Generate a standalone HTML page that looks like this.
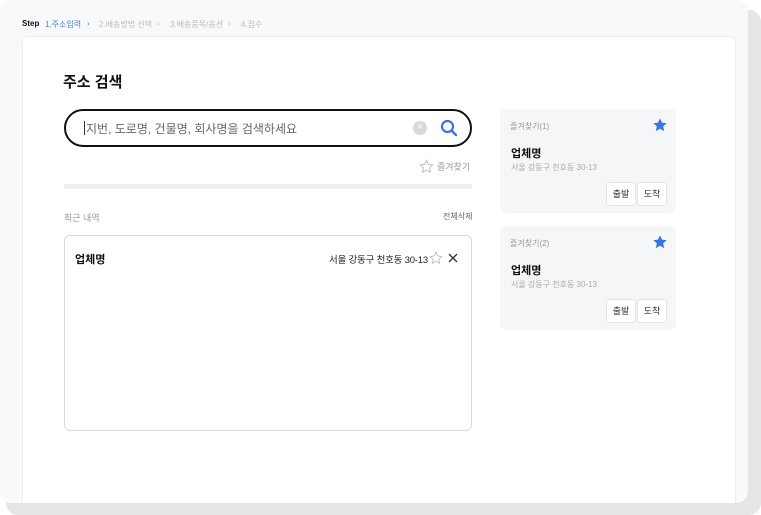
<!DOCTYPE html>
<html><head><meta charset="utf-8"><style>
*{margin:0;padding:0;box-sizing:border-box}
body{width:761px;height:515px;background:#fff;font-family:"Liberation Sans","Noto Sans CJK KR",sans-serif;position:relative;overflow:hidden}
.shadow{position:absolute;left:6px;top:10px;width:755px;height:505px;background:#e5e5e5;border-radius:12px}
.frame{position:absolute;left:0;top:0;width:748px;height:503px;background:#f8f9fb;border-radius:12px}
.card{position:absolute;left:22px;top:36px;width:714px;height:467px;background:#fff;border-left:1px solid #eceef1;border-right:1px solid #eceef1;border-top:1px solid #eceef1;border-radius:6px 6px 0 0}
.a{position:absolute;white-space:nowrap}
.step{top:19px;font-size:8px;color:#bbb}
.search{left:64px;top:109px;width:408px;height:38px;border:2px solid #111;border-radius:19px}
.fc{background:#f5f6f8;border-radius:6px;width:176px;height:104px;left:500px}
.btn{background:#fff;border:1px solid #e4e4e4;border-radius:3px;width:30px;height:24px;font-size:9px;color:#333;text-align:center;line-height:22px}
</style></head><body>
<div class="shadow"></div><div class="frame"></div><div class="card"></div>
<div class="a step" style="left:22px;color:#111;font-weight:bold">Step</div>
<div class="a step" style="left:45px;color:#4a7fe0">1.주소입력</div>
<div class="a step" style="left:87px;color:#4a7fe0">›</div>
<div class="a step" style="left:99px">2.배송방법 선택</div>
<div class="a step" style="left:157px">›</div>
<div class="a step" style="left:170px">3.배송품목/옵션</div>
<div class="a step" style="left:228px">›</div>
<div class="a step" style="left:241px">4.접수</div>
<div class="a" style="left:63px;top:71px;font-size:15px;font-weight:bold;color:#111">주소 검색</div>
<div class="a search"></div>
<div class="a" style="left:84px;top:121px;width:1px;height:14px;background:#333"></div>
<div class="a" style="left:86px;top:120px;font-size:12px;color:#666">지번, 도로명, 건물명, 회사명을 검색하세요</div>
<div class="a" style="left:413px;top:121px;width:14px;height:14px;border-radius:50%;background:#d9d9d9;color:#fff;font-size:10px;text-align:center;line-height:14px">×</div>
<svg class="a" style="left:440px;top:119px" width="18" height="18" viewBox="0 0 18 18"><circle cx="7.5" cy="7.5" r="5.5" fill="none" stroke="#3b73e0" stroke-width="2.2"/><path d="M11.5 11.5L16 16" stroke="#3b73e0" stroke-width="2.4" stroke-linecap="round"/></svg>
<svg class="a" style="left:419px;top:159px" width="15" height="15" viewBox="0 0 24 24"><path d="M12 2l3 6.5 7 .8-5.2 4.8 1.5 7L12 17.6 5.7 21.1l1.5-7L2 9.3l7-.8z" fill="none" stroke="#bbb" stroke-width="1.5"/></svg>
<div class="a" style="left:437px;top:160px;font-size:9px;color:#999">즐겨찾기</div>
<div class="a" style="left:64px;top:184px;width:408px;height:5px;background:#efefef"></div>
<div class="a" style="left:64px;top:211px;font-size:9px;color:#999">최근 내역</div>
<div class="a" style="left:443px;top:211px;font-size:8px;color:#666">전체삭제</div>
<div class="a" style="left:64px;top:235px;width:408px;height:196px;border:1px solid #d9d9d9;border-radius:6px"></div>
<div class="a" style="left:75px;top:251px;font-size:11px;font-weight:bold;color:#111">업체명</div>
<div class="a" style="left:329px;top:252px;font-size:9.5px;color:#222;letter-spacing:-0.2px">서울 강동구 천호동 30-13</div>
<svg class="a" style="left:429px;top:251px" width="14" height="14" viewBox="0 0 24 24"><path d="M12 2l3 6.5 7 .8-5.2 4.8 1.5 7L12 17.6 5.7 21.1l1.5-7L2 9.3l7-.8z" fill="none" stroke="#bbb" stroke-width="1.5"/></svg>
<svg class="a" style="left:448px;top:253px" width="10" height="10" viewBox="0 0 10 10"><path d="M1 1L9 9M9 1L1 9" stroke="#333" stroke-width="1.3"/></svg>

<div class="a fc" style="top:109px"></div>
<div class="a" style="left:510px;top:121px;font-size:8px;color:#999">즐겨찾기(1)</div>
<svg class="a" style="left:652px;top:117px" width="16" height="16" viewBox="0 0 24 24"><path d="M12 2l3 6.5 7 .8-5.2 4.8 1.5 7L12 17.6 5.7 21.1l1.5-7L2 9.3l7-.8z" fill="#3b73e0"/></svg>
<div class="a" style="left:511px;top:145px;font-size:11px;font-weight:bold;color:#111">업체명</div>
<div class="a" style="left:511px;top:162px;font-size:8px;color:#aaa">서울 강동구 천호동 30-13</div>
<div class="a btn" style="left:606px;top:182px">출발</div>
<div class="a btn" style="left:637px;top:182px">도착</div>

<div class="a fc" style="top:226px"></div>
<div class="a" style="left:510px;top:238px;font-size:8px;color:#999">즐겨찾기(2)</div>
<svg class="a" style="left:652px;top:234px" width="16" height="16" viewBox="0 0 24 24"><path d="M12 2l3 6.5 7 .8-5.2 4.8 1.5 7L12 17.6 5.7 21.1l1.5-7L2 9.3l7-.8z" fill="#3b73e0"/></svg>
<div class="a" style="left:511px;top:262px;font-size:11px;font-weight:bold;color:#111">업체명</div>
<div class="a" style="left:511px;top:279px;font-size:8px;color:#aaa">서울 강동구 천호동 30-13</div>
<div class="a btn" style="left:606px;top:299px">출발</div>
<div class="a btn" style="left:637px;top:299px">도착</div>
</body></html>
